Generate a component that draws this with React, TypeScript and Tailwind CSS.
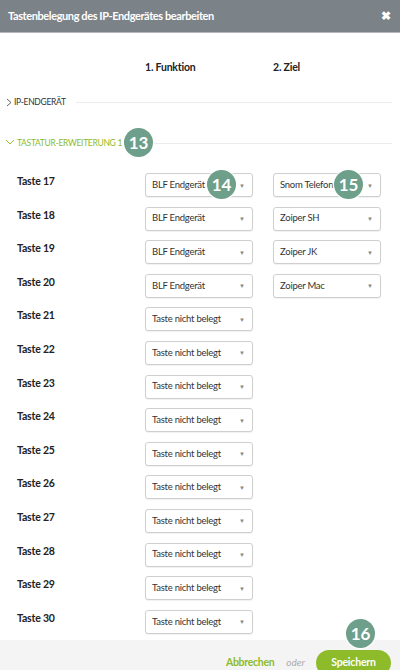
import React from "react";

const GREEN = "#8dbb2a";

function Badge({ n, className }: { n: string; className: string }) {
  return (
    <div
      className={
        "absolute w-[29px] h-[29px] rounded-full bg-[#6e9f8a] text-white font-bold text-[17px] flex items-center justify-center leading-none shadow-[0_0_0_1.5px_rgba(255,255,255,0.7)] " +
        className
      }
    >
      {n}
    </div>
  );
}

function Select({ text }: { text: string }) {
  return (
    <div className="w-[108px] h-[24px] border border-[#cfcfcf] rounded-[3px] bg-white shadow-[0_1px_1px_rgba(0,0,0,0.06)] flex items-center justify-between pl-[6px] pr-[7px]">
      <span className="text-[9.5px] tracking-[-0.25px] text-[#333] whitespace-nowrap">{text}</span>
      <span className="text-[6px] text-[#888]">▼</span>
    </div>
  );
}

export default function App() {
  const rows: [number, string, string | null][] = [
    [17, "BLF Endgerät", "Snom Telefon"],
    [18, "BLF Endgerät", "Zoiper SH"],
    [19, "BLF Endgerät", "Zoiper JK"],
    [20, "BLF Endgerät", "Zoiper Mac"],
    [21, "Taste nicht belegt", null],
    [22, "Taste nicht belegt", null],
    [23, "Taste nicht belegt", null],
    [24, "Taste nicht belegt", null],
    [25, "Taste nicht belegt", null],
    [26, "Taste nicht belegt", null],
    [27, "Taste nicht belegt", null],
    [28, "Taste nicht belegt", null],
    [29, "Taste nicht belegt", null],
    [30, "Taste nicht belegt", null],
  ];
  return (
    <div
      className="w-[400px] h-[670px] bg-white flex flex-col overflow-hidden"
      style={{ fontFamily: "Lato, 'Noto Sans', sans-serif" }}
    >
      <div className="h-[33px] shrink-0 bg-[#7b8288] border-b border-[#b4b8bc] flex items-center justify-between pl-[8px] pr-[9px]">
        <span className="text-white font-bold text-[11px] tracking-[-0.4px]">
          Tastenbelegung des IP-Endgerätes bearbeiten
        </span>
        <span className="text-white font-bold text-[12px] leading-none">✖</span>
      </div>

      <div className="flex-1 overflow-hidden">
        <div className="mt-[28px] h-[14px] flex items-center text-[10.5px] tracking-[-0.2px] font-bold text-[#222]">
          <span className="ml-[145px] w-[128px]">1. Funktion</span>
          <span>2. Ziel</span>
        </div>

        <div className="mt-[20px] h-[14px] flex items-center pl-[6px] pr-[8px]">
          <svg width="6" height="9" viewBox="0 0 6 9" className="mr-[2px]">
            <polyline points="1,1 5,4.5 1,8" fill="none" stroke="#555" strokeWidth="0.9" />
          </svg>
          <span className="text-[8.5px] text-[#333] uppercase tracking-[-0.3px]">IP-Endgerät</span>
          <div className="flex-1 h-[1px] bg-[#ececec] ml-[10px]" />
        </div>

        <div className="mt-[27px] h-[14px] flex items-center pl-[5px] pr-[8px] relative">
          <svg width="10" height="6" viewBox="0 0 10 6" className="mr-[2px] -mt-[3px]">
            <polyline points="1,1 5,5 9,1" fill="none" stroke={GREEN} strokeWidth="0.9" />
          </svg>
          <span className="text-[8.5px] uppercase tracking-[-0.3px]" style={{ color: GREEN }}>
            Tastatur-Erweiterung 1
          </span>
          <div className="flex-1 h-[1px] bg-[#ececec] ml-[10px]" />
          <Badge n="13" className="left-[124px] top-[-8px]" />
        </div>

        <div className="mt-[23px]">
          {rows.map(([n, f, z]) => (
            <div key={n} className="h-[33.6px] flex items-start relative">
              <span className="w-[145px] pl-[17px] pt-[1px] text-[10.5px] tracking-[-0.2px] font-bold text-[#222] leading-[14px]">
                Taste {n}
              </span>
              <Select text={f} />
              {z && (
                <div className="ml-[20px]">
                  <Select text={z} />
                </div>
              )}
              {n === 17 && (
                <>
                  <Badge n="14" className="left-[207px] top-[-3px]" />
                  <Badge n="15" className="left-[334px] top-[-3px]" />
                </>
              )}
            </div>
          ))}
        </div>
      </div>

      <div className="h-[30px] shrink-0 bg-[#f4f4f4] relative flex items-start justify-end pr-[9px] pt-[10px]">
        <span className="text-[10.5px] tracking-[-0.3px] font-bold mt-[5px]" style={{ color: GREEN }}>
          Abbrechen
        </span>
        <span className="text-[10px] italic text-[#aaa] ml-[12px] mt-[5px]">oder</span>
        <div
          className="ml-[11px] w-[75px] h-[26px] rounded-full flex items-center justify-center text-white font-bold text-[10.5px] tracking-[-0.2px]"
          style={{ backgroundColor: GREEN }}
        >
          Speichern
        </div>
        <Badge n="16" className="left-[346px] top-[-21px]" />
      </div>
    </div>
  );
}
